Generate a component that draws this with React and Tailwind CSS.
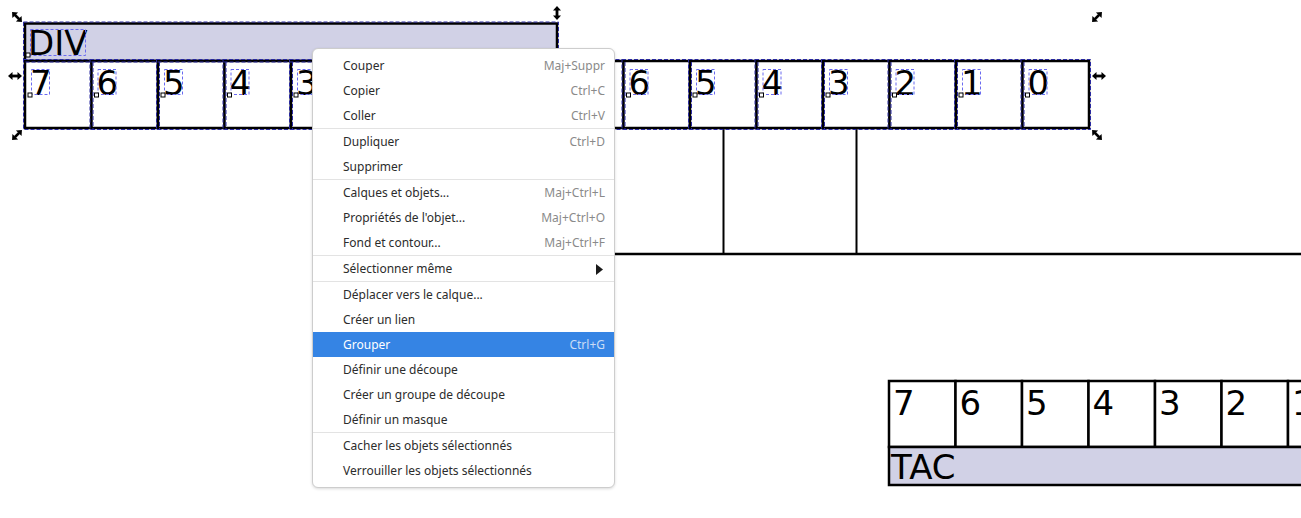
const CELL = 66.5;
const topLabels = ['7', '6', '5', '4', '3', '2', '1', '0', '7', '6', '5', '4', '3', '2', '1', '0'];
const bottomLabels = ['7', '6', '5', '4', '3', '2', '1'];

const menu = [
  [{ label: 'Couper', key: 'Maj+Suppr' }, { label: 'Copier', key: 'Ctrl+C' }, { label: 'Coller', key: 'Ctrl+V' }],
  [{ label: 'Dupliquer', key: 'Ctrl+D' }, { label: 'Supprimer' }],
  [
    { label: 'Calques et objets...', key: 'Maj+Ctrl+L' },
    { label: "Propriétés de l'objet...", key: 'Maj+Ctrl+O' },
    { label: 'Fond et contour...', key: 'Maj+Ctrl+F' },
  ],
  [{ label: 'Sélectionner même', submenu: true }],
  [
    { label: 'Déplacer vers le calque...' },
    { label: 'Créer un lien' },
    { label: 'Grouper', key: 'Ctrl+G', active: true },
    { label: 'Définir une découpe' },
    { label: 'Créer un groupe de découpe' },
    { label: 'Définir un masque' },
  ],
  [{ label: 'Cacher les objets sélectionnés' }, { label: 'Verrouiller les objets sélectionnés' }],
];

const textCls = "font-['DejaVu_Sans',sans-serif] text-[34px]";

// double headed arrow used for the selection scale handles
function Handle({ x, y, r }) {
  return (
    <g transform={`translate(${x} ${y}) rotate(${r})`} fill="#000">
      <rect x="-3" y="-1.4" width="6" height="2.8" />
      <polygon points="-7,0 -2.5,-4 -2.5,4" />
      <polygon points="7,0 2.5,-4 2.5,4" />
    </g>
  );
}

function Node({ x, y }) {
  return <rect x={x - 2} y={y - 2} width="4" height="4" fill="#fff" stroke="#000" strokeWidth="1" />;
}

function Canvas() {
  return (
    <svg className="absolute left-0 top-0" width="1301" height="518" viewBox="0 0 1301 518">
      {/* connectors under the selected group */}
      <line x1="723.5" y1="128" x2="723.5" y2="254" stroke="#000" strokeWidth="2" />
      <line x1="856.5" y1="128" x2="856.5" y2="254" stroke="#000" strokeWidth="2" />
      <line x1="560" y1="254" x2="1301" y2="254" stroke="#000" strokeWidth="2.5" />

      {/* top group: DIV bar + 16 bit cells */}
      <rect x="25" y="23.5" width="532" height="37.5" fill="#d1d1e6" stroke="#000" strokeWidth="2.5" />
      {topLabels.map((_, i) => (
        <rect key={i} x={25 + i * CELL} y="61" width={CELL} height="67" fill="#fff" stroke="#000" strokeWidth="2.5" />
      ))}
      <rect x="23.5" y="22" width="535" height="40" fill="none" stroke="#2a2aa0" strokeWidth="1" strokeDasharray="4 2" />
      {topLabels.map((_, i) => (
        <rect
          key={i}
          x={23.5 + i * CELL}
          y="59.5"
          width={CELL + 3}
          height="70"
          fill="none"
          stroke="#2a2aa0"
          strokeWidth="1"
          strokeDasharray="4 2"
        />
      ))}
      <text x="28" y="55" className={textCls}>DIV</text>
      <rect x="30.5" y="29.5" width="55" height="26" fill="none" stroke="#6a6af0" strokeWidth="1" strokeDasharray="3 2" />
      <Node x={28} y={55} />
      {topLabels.map((t, i) => {
        const x = 30 + i * CELL;
        return (
          <g key={i}>
            <text x={x} y="95" className={textCls}>{t}</text>
            <rect x={x + 1.5} y="69.5" width="18" height="25" fill="none" stroke="#6a6af0" strokeWidth="1" strokeDasharray="3 2" />
            <Node x={x} y={95} />
          </g>
        );
      })}

      <Handle x={17} y={17} r={45} />
      <Handle x={557} y={13} r={90} />
      <Handle x={1097} y={17} r={-45} />
      <Handle x={15} y={76} r={0} />
      <Handle x={1099} y={76} r={0} />
      <Handle x={17} y={135} r={-45} />
      <Handle x={557} y={139} r={90} />
      <Handle x={1097} y={135} r={45} />

      {/* bottom group: bit cells + TAC bar */}
      {bottomLabels.map((t, i) => (
        <g key={i}>
          <rect x={889 + i * CELL} y="381" width={CELL} height="66" fill="#fff" stroke="#000" strokeWidth="2.5" />
          <text x={893 + i * CELL} y="415" className={textCls}>{t}</text>
        </g>
      ))}
      <rect x="889" y="447" width="440" height="38" fill="#d1d1e6" stroke="#000" strokeWidth="2.5" />
      <text x="891" y="479" className={textCls}>TAC</text>
    </svg>
  );
}

function MenuItem({ item }) {
  return (
    <div
      className={`flex h-[25px] items-center justify-between pl-[30px] pr-[9px] pt-px ${
        item.active ? 'bg-[#3584e4] text-white' : 'text-[#2c2c2c]'
      }`}
    >
      <span>{item.label}</span>
      {item.key && <span className={item.active ? 'text-[#c9dcf5]' : 'text-[#8a8a8a]'}>{item.key}</span>}
      {item.submenu && (
        <svg width="7" height="11" viewBox="0 0 7 11" className="mr-[2px]">
          <polygon points="0,0 7,5.5 0,11" fill="#1a1a1a" />
        </svg>
      )}
    </div>
  );
}

export default function App() {
  return (
    <div className="relative h-[518px] w-[1301px] overflow-hidden bg-white">
      <Canvas />

      {/* context menu */}
      <div className="absolute left-[312px] top-[48px] w-[303px] rounded-[6px] border border-[#cdcdcd] bg-white py-[4px] font-['Noto_Sans',sans-serif] text-[12px] shadow-[0_1px_3px_rgba(0,0,0,0.15)]">
        {menu.map((section, si) => (
          <div key={si} className={si > 0 ? 'border-t border-[#e3e3e3]' : ''}>
            {section.map((item) => (
              <MenuItem key={item.label} item={item} />
            ))}
          </div>
        ))}
      </div>
    </div>
  );
}
